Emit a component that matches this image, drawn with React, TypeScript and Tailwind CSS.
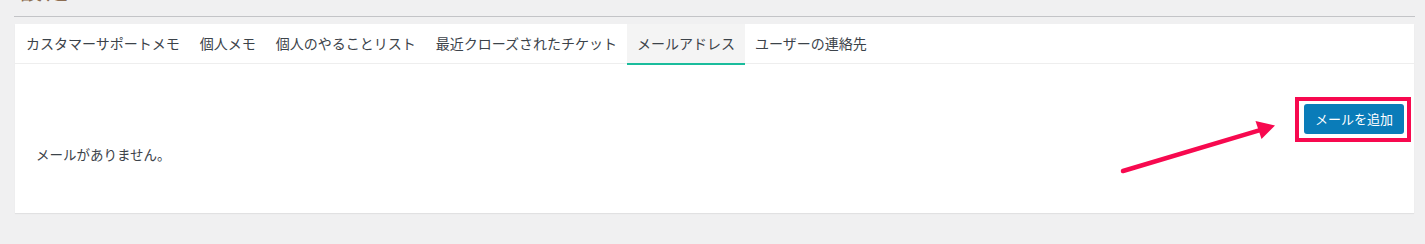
import { useState } from "react";

const tabs = [
  "カスタマーサポートメモ",
  "個人メモ",
  "個人のやることリスト",
  "最近クローズされたチケット",
  "メールアドレス",
  "ユーザーの連絡先",
];

export default function App() {
  const [active, setActive] = useState(4);

  return (
    <div className="w-full h-[244px] bg-[#f0f0f1] font-['Noto_Sans_CJK_JP',sans-serif] text-[#3c434a] overflow-hidden">
      {/* cut-off page heading */}
      <div className="h-[17px] ml-[14px] mr-[10px] border-b border-[#c3c4c7] overflow-hidden">
        <h2 className="pl-[6px] -mt-[22px] text-[22px] leading-[22px] text-[#8c6d52] tracking-[4px]">設定</h2>
      </div>

      {/* card */}
      <div className="relative mt-[7px] ml-[15px] mr-[11px] bg-white shadow-[0_1px_1px_rgba(0,0,0,0.06)]">
        {/* tabs */}
        <div className="flex h-[40px] border-b border-[#eeeeee]">
          {tabs.map((t, i) => (
            <button
              key={t}
              onClick={() => setActive(i)}
              className={`relative h-[39px] px-[10px] text-[14px] leading-[39px] whitespace-nowrap ${
                i === 0 ? "pl-[11px]" : ""
              } ${active === i ? "bg-[#f4f4f4]" : ""}`}
            >
              {t}
              {active === i && (
                <span className="absolute left-0 right-0 top-full h-[2px] bg-[#1abc9c]" />
              )}
            </button>
          ))}
        </div>

        {/* content */}
        <div className="pt-[40px] pb-[49px] pl-[21px] pr-[10px]">
          <div className="flex justify-end">
            <div className="relative">
              <button className="w-[100px] h-[30px] rounded-[3px] bg-[#0a7cb9] text-white text-[13px] leading-[30px]">
                メールを追加
              </button>
              {/* highlight box */}
              <span className="absolute -left-[9px] -right-[7px] -top-[7px] -bottom-[8px] border-[4px] border-[#f7094f] pointer-events-none" />
            </div>
          </div>
          <p className="mt-[10px] text-[13.5px] leading-[20px] text-[#3c434a]">メールがありません。</p>
        </div>

        {/* annotation arrow */}
        <svg
          className="absolute left-[1100px] top-[90px] pointer-events-none"
          width="180"
          height="90"
          viewBox="0 0 180 90"
        >
          <line x1="8" y1="57" x2="145" y2="16.2" stroke="#f7094f" strokeWidth="4.5" strokeLinecap="round" />
          <polygon points="160,11.5 146.5,25 140.5,7" fill="#f7094f" />
        </svg>
      </div>
    </div>
  );
}
